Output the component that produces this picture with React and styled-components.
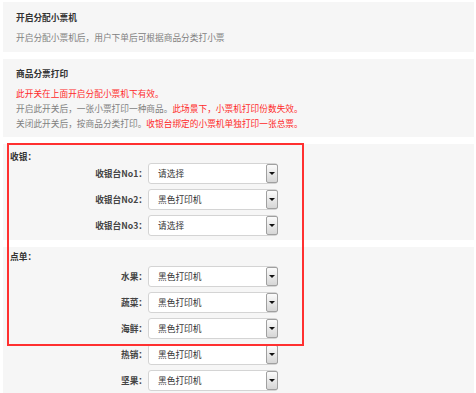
import React from 'react';
import styled, { createGlobalStyle } from 'styled-components';

const Global = createGlobalStyle`
body{
    margin: 0;
    background: #fff;
    font-family: "Noto Sans CJK SC", "Liberation Sans", sans-serif;
    font-size: 8.7px;
    color: #333;
}
`

const Page = styled.div`
position: relative;
width: 476px;
height: 393px;
padding: 2px 2px 0 3px;
box-sizing: border-box;
display: flex;
flex-direction: column;
gap: 7px;
overflow: hidden;
`

const Panel = styled.div`
background: #f6f6f6;
padding: ${props => props.pad || '8px 13px'};
display: flex;
flex-direction: column;
flex: ${props => props.grow ? 1 : 'none'};
`

const Title = styled.div`
font-weight: 700;
height: 16px;
line-height: 16px;
color: #333;
`

const Desc = styled.div`
color: #808080;
height: 16px;
line-height: 16px;
margin-top: ${props => props.top || 0}px;
`

const Note = styled.div`
color: #808080;
height: 15px;
line-height: 15px;
margin-top: ${props => props.top || 0}px;
`

const Red = styled.span`
color: #ff2a2a;
`

const GroupLabel = styled.div`
font-weight: 700;
height: 14px;
line-height: 14px;
color: #333;
padding-left: 7px;
`

const Rows = styled.div`
display: flex;
flex-direction: column;
gap: 5px;
margin-top: ${props => props.top || 0}px;
`

const Row = styled.div`
display: flex;
align-items: center;
height: 21px;
`

const Label = styled.div`
width: 144px;
text-align: right;
font-weight: 700;
color: #444;
padding-right: 1px;
`

const Select = styled.div`
width: 130px;
height: 21px;
box-sizing: border-box;
border: 1px solid #d4d4d4;
border-radius: 3px;
background: #fff;
display: flex;
align-items: center;
padding-left: 9px;
color: #333;
`

const Text = styled.span`
flex: 1;
line-height: 19px;
`

const Arrow = styled.div`
width: 12px;
height: 19px;
box-sizing: border-box;
border: 1px solid #a0a0a0;
border-radius: 2px;
background: linear-gradient(#fbfbfb, #d6d6d6);
display: flex;
align-items: center;
justify-content: center;
margin-right: -1px;

&::after{
    content: '';
    border-left: 3px solid transparent;
    border-right: 3px solid transparent;
    border-top: 3px solid #111;
}
`

const Mark = styled.div`
position: absolute;
left: 7px;
top: 143px;
width: 297px;
height: 203px;
box-sizing: border-box;
border: 2px solid #ff3030;
pointer-events: none;
`

const cashier = [
    { label: '收银台No1：', value: '请选择' },
    { label: '收银台No2：', value: '黑色打印机' },
    { label: '收银台No3：', value: '请选择' },
]

const order = [
    { label: '水果：', value: '黑色打印机' },
    { label: '蔬菜：', value: '黑色打印机' },
    { label: '海鲜：', value: '黑色打印机' },
    { label: '热销：', value: '黑色打印机' },
    { label: '坚果：', value: '黑色打印机' },
]

const PrinterRow = ({ label, value }) => (
    <Row>
        <Label>{label}</Label>
        <Select>
            <Text>{value}</Text>
            <Arrow />
        </Select>
    </Row>
)

const App = () => {
    return (
        <>
            <Global />
            <Page>
                <Panel pad="8px 13px 6px">
                    <Title>开启分配小票机</Title>
                    <Desc top={4}>开启分配小票机后，用户下单后可根据商品分类打小票</Desc>
                </Panel>
                <Panel pad="7px 13px 6px">
                    <Title>商品分票打印</Title>
                    <Note top={4}><Red>此开关在上面开启分配小票机下有效。</Red></Note>
                    <Note>开启此开关后，一张小票打印一种商品。<Red>此场景下，小票机打印份数失效。</Red></Note>
                    <Note>关闭此开关后，按商品分类打印。<Red>收银台绑定的小票机单独打印一张总票。</Red></Note>
                </Panel>
                <Panel pad="6px 0 4px">
                    <GroupLabel>收银：</GroupLabel>
                    <Rows top={-1}>
                        {cashier.map((c, id) => <PrinterRow key={id} {...c} />)}
                    </Rows>
                </Panel>
                <Panel pad="3px 0 2px" grow>
                    <GroupLabel>点单：</GroupLabel>
                    <Rows top={2}>
                        {order.map((c, id) => <PrinterRow key={id} {...c} />)}
                    </Rows>
                </Panel>
                <Mark />
            </Page>
        </>
    );
};

export default App;
